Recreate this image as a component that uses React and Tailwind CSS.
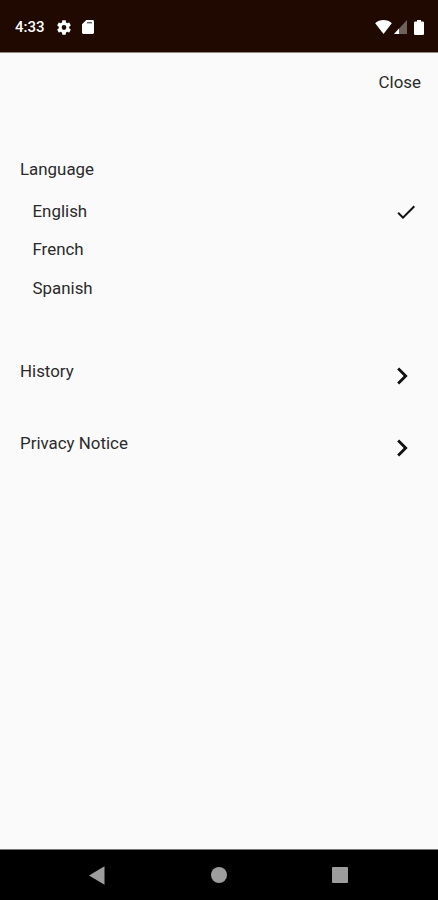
const languages = [
  { name: 'English', selected: true },
  { name: 'French', selected: false },
  { name: 'Spanish', selected: false },
];

function StatusBar() {
  return (
    <header className="flex h-[53px] shrink-0 items-center border-b border-[#94877f] bg-[#1f0900] pt-[2px] pl-[15px] pr-[14px] text-white">
      <span className="w-[42px] text-[15px] font-medium leading-5">4:33</span>
      <svg className="h-[15px] w-[14px]" viewBox="2.4 2 19.2 20" preserveAspectRatio="none" fill="currentColor">
        <path d="M19.14 12.94c.04-.3.06-.61.06-.94 0-.32-.02-.64-.07-.94l2.03-1.58c.18-.14.23-.41.12-.61l-1.92-3.32c-.12-.22-.37-.29-.59-.22l-2.39.96c-.5-.38-1.03-.7-1.62-.94l-.36-2.54c-.04-.24-.24-.41-.48-.41h-3.84c-.24 0-.43.17-.47.41l-.36 2.54c-.59.24-1.13.57-1.62.94l-2.39-.96c-.22-.08-.47 0-.59.22L2.74 8.87c-.12.21-.08.47.12.61l2.03 1.58c-.05.3-.09.63-.09.94s.02.64.07.94l-2.03 1.58c-.18.14-.23.41-.12.61l1.92 3.32c.12.22.37.29.59.22l2.39-.96c.5.38 1.03.7 1.62.94l.36 2.54c.05.24.24.41.48.41h3.84c.24 0 .44-.17.47-.41l.36-2.54c.59-.24 1.13-.56 1.62-.94l2.39.96c.22.08.47 0 .59-.22l1.92-3.32c.12-.22.07-.47-.12-.61zM12 15.2A3.2 3.2 0 1 1 12 8.8a3.2 3.2 0 0 1 0 6.4z" />
      </svg>
      <svg className="ml-[11px] h-[14px] w-[12px]" viewBox="0 0 12 14">
        <path d="M4.3 0H10.6Q12 0 12 1.4V12.6Q12 14 10.6 14H1.4Q0 14 0 12.6V4.3z" fill="#fff" />
        <path d="M5 2.7h5" stroke="#200a01" strokeOpacity=".65" strokeWidth="1.4" />
      </svg>
      <div className="ml-auto flex items-center">
        <svg className="h-[14px] w-[17px]" viewBox="0 0 17 14" fill="currentColor">
          <path d="M8.5 14 0.2 3.2C2.4 1.2 5.3 0 8.5 0s6.1 1.2 8.3 3.2z" />
        </svg>
        <svg className="ml-[2px] h-[14px] w-[13px]" viewBox="0 0 13 14">
          <path d="M13 0V14H0z" fill="#6f625d" />
          <path d="M5 8.6V14H0z" fill="#fff" />
        </svg>
        <svg className="ml-[7px] h-[15px] w-[10px]" viewBox="0 0 10 15" fill="currentColor">
          <path d="M3 0h4v1.4h1.8Q10 1.4 10 2.6v11.2Q10 15 8.8 15H1.2Q0 15 0 13.8V2.6Q0 1.4 1.2 1.4H3z" />
        </svg>
      </div>
    </header>
  );
}

function LinkRow({ label }) {
  return (
    <button className="flex h-[72px] w-full items-start justify-between pl-5 pr-[19px] text-left">
      <span className="leading-6">{label}</span>
      <svg className="h-[34px] w-[34px]" viewBox="0 0 24 24" fill="#111">
        <path d="M10 6 8.59 7.41 13.17 12l-4.58 4.59L10 18l6-6z" />
      </svg>
    </button>
  );
}

function NavigationBar() {
  return (
    <nav className="flex h-[51px] shrink-0 items-center border-t border-[#777] bg-black pl-[89px]">
      <svg className="h-[19px] w-[16px]" viewBox="0 0 16 19" fill="#9d9d9d">
        <path d="M15.5 0.3V18.7L0 9.5z" />
      </svg>
      <span className="ml-[106px] h-4 w-4 rounded-full bg-[#9d9d9d]" />
      <span className="ml-[105px] h-4 w-4 rounded-[1px] bg-[#9d9d9d]" />
    </nav>
  );
}

export default function App() {
  return (
    <div className="flex h-[900px] w-[438px] flex-col overflow-hidden bg-[#fafafa] font-['Roboto',sans-serif] text-[16.9px] text-[#2b2b2b]">
      <StatusBar />
      <main className="flex-1">
        <div className="flex justify-end pt-[17px] pr-[17px]">
          <button className="leading-6">Close</button>
        </div>
        <section className="mt-[63px]">
          <h2 className="pl-5 leading-6">Language</h2>
          <ul className="mt-[11px]">
            {languages.map(({ name, selected }) => (
              <li key={name} className="flex h-[38.5px] items-center justify-between pl-[32.5px] pr-5">
                <span>{name}</span>
                {selected && (
                  <svg className="mt-px h-6 w-6" viewBox="0 0 24 24" fill="#111">
                    <path d="M9 16.17 4.83 12l-1.42 1.41L9 19 21 7l-1.41-1.41z" />
                  </svg>
                )}
              </li>
            ))}
          </ul>
        </section>
        <section className="mt-[51.5px]">
          <LinkRow label="History" />
          <LinkRow label="Privacy Notice" />
        </section>
      </main>
      <NavigationBar />
    </div>
  );
}
